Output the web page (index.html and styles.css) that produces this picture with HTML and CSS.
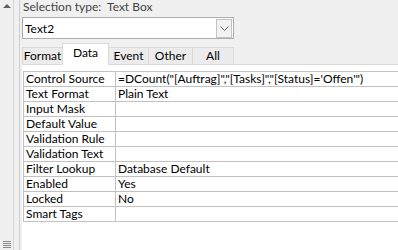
FILE: index.html
```html
<!DOCTYPE html>
<html lang="en">

<head>
    <meta charset="UTF-8">
    <title>Property Sheet</title>
    <link rel="stylesheet" href="styles.css">
</head>

<body>
    <div class="janela">
        <div class="barra-rolagem">
            <span class="seta-cima"></span>
            <span class="pega"></span>
        </div>
        <div class="espaco"></div>

        <div class="painel">
            <div class="tipo-selecao">Selection type:&nbsp; Text Box</div>

            <div class="combo">
                <span class="combo-texto">Text2</span>
                <span class="combo-botao">
                    <svg width="9" height="5" viewBox="0 0 9 5">
                        <path d="M0.5 0.5 L4.5 4.5 L8.5 0.5" fill="none" stroke="#606060" stroke-width="1"/>
                    </svg>
                </span>
            </div>

            <div class="abas">
                <div class="aba aba-format">Format</div>
                <div class="aba aba-data ativa">Data</div>
                <div class="aba aba-event">Event</div>
                <div class="aba aba-other">Other</div>
                <div class="aba aba-all">All</div>
            </div>

            <div class="conteudo">
                <table class="propriedades">
                    <tr><td class="nome">Control Source</td><td class="valor">=DCount("[Auftrag]","[Tasks]","[Status]='Offen'")</td></tr>
                    <tr><td class="nome">Text Format</td><td class="valor">Plain Text</td></tr>
                    <tr><td class="nome">Input Mask</td><td class="valor"></td></tr>
                    <tr><td class="nome">Default Value</td><td class="valor"></td></tr>
                    <tr><td class="nome">Validation Rule</td><td class="valor"></td></tr>
                    <tr><td class="nome">Validation Text</td><td class="valor"></td></tr>
                    <tr><td class="nome">Filter Lookup</td><td class="valor">Database Default</td></tr>
                    <tr><td class="nome">Enabled</td><td class="valor">Yes</td></tr>
                    <tr><td class="nome">Locked</td><td class="valor">No</td></tr>
                    <tr><td class="nome">Smart Tags</td><td class="valor"></td></tr>
                </table>
            </div>
        </div>
    </div>
</body>

</html>
```

FILE: styles.css
```css
html,
body {
    margin: 0;
    padding: 0;
}

body {
    background-color: #f0f0f0;
    font-family: Lato, "Liberation Sans", sans-serif;
    font-size: 12px;
    color: #000;
}

.janela {
    display: flex;
    width: 398px;
    height: 250px;
    overflow: hidden;
}

.barra-rolagem {
    flex-shrink: 0;
    width: 13px;
    border-right: 1px solid #d6d6d6;
    background-color: #f0f0f0;
    display: flex;
    flex-direction: column;
    justify-content: space-between;
    align-items: center;
}

.seta-cima {
    margin-top: 4px;
    width: 0;
    height: 0;
    border-left: 4px solid transparent;
    border-right: 4px solid transparent;
    border-bottom: 4px solid #606060;
}

.pega {
    width: 8px;
    height: 7px;
    margin-bottom: 2px;
    background: repeating-linear-gradient(to bottom, #8a8a8a 0, #8a8a8a 1px, transparent 1px, transparent 2px);
}

.espaco {
    flex-shrink: 0;
    width: 5px;
}

.painel {
    flex: 1;
    min-width: 0;
    border-left: 1px solid #cfcfcf;
    padding-left: 2px;
    display: flex;
    flex-direction: column;
}

.tipo-selecao {
    height: 16px;
    line-height: 14px;
    padding-left: 1px;
    color: #444;
}

.combo {
    margin-top: 1px;
    width: 210px;
    height: 20px;
    border: 1px solid #abadb3;
    background-color: #fff;
    display: flex;
    align-items: center;
    justify-content: space-between;
}

.combo-texto {
    padding-left: 2px;
}

.combo-botao {
    width: 14px;
    height: 17px;
    margin-right: 1px;
    border: 1px solid #c4c4c4;
    background-color: #f2f2f2;
    display: flex;
    align-items: center;
    justify-content: center;
}

.abas {
    margin-top: 5px;
    height: 20px;
    display: flex;
    align-items: flex-end;
    border-bottom: 1px solid #d9d9d9;
}

.aba {
    flex-shrink: 0;
    height: 16px;
    line-height: 16px;
    border: 1px solid #d9d9d9;
    border-bottom: none;
    margin-right: -1px;
    background-color: #ececec;
    text-align: center;
}

.ativa {
    height: 21px;
    line-height: 17px;
    background-color: #fff;
    margin-bottom: -1px;
}

.aba-format { width: 39px; }
.aba-data { width: 45px; }
.aba-event { width: 39px; }
.aba-other { width: 43px; }
.aba-all { width: 40px; }

.conteudo {
    flex: 1;
    background-color: #fff;
    padding-top: 6px;
    padding-left: 1px;
    overflow: hidden;
}

.propriedades {
    border-collapse: collapse;
    width: 400px;
}

.propriedades td {
    height: 14px;
    padding: 0 0 0 2px;
    line-height: 14px;
    border: 1px solid #c2c2c2;
    white-space: nowrap;
}

.propriedades .nome {
    width: 89px;
}
```
